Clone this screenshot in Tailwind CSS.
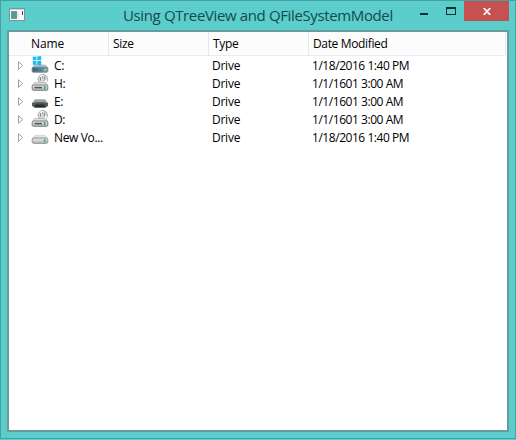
<!DOCTYPE html>
<html lang="en">
<head>
<meta charset="utf-8">
<title>Using QTreeView and QFileSystemModel</title>
<script src="https://cdn.jsdelivr.net/npm/@tailwindcss/browser@4"></script>
</head>
<body class="overflow-hidden bg-[#5bcdcb]">
<svg class="absolute h-0 w-0">
  <defs>
    <linearGradient id="face" x1="0" x2="0" y1="0" y2="1"><stop offset="0" stop-color="#e9eaeb"/><stop offset="1" stop-color="#b3b6b8"/></linearGradient>
    <linearGradient id="blue" x1="0" x2="1" y1="0" y2="0"><stop offset="0" stop-color="#2f637f"/><stop offset="1" stop-color="#7c9aa8"/></linearGradient>
    <symbol id="arrow" viewBox="0 0 7 9"><path d="M1.5 .7V8.3L5.7 4.5Z" fill="#fff" stroke="#a0a0a0"/></symbol>
    <symbol id="system" viewBox="0 0 18 18">
      <path d="M3.5 8.5H14.5L17 12H1Z" fill="#b5bfc5"/>
      <rect x="1.2" y="11.2" width="15.6" height="5" rx="1" fill="url(#blue)" stroke="#7c878d" stroke-width=".9"/>
      <path d="M12.7 14H15.2" stroke="#5ef4a0" stroke-width="1.6"/>
      <path d="M1.8 .8 5.4 .5V4.3H1.8ZM6.2.4 10.2 0V4.3H6.2ZM1.8 5.1H5.4V9L1.8 8.7ZM6.2 5.1H10.2V9.5L6.2 9.1Z" fill="#1dbdec"/>
    </symbol>
    <symbol id="disc" viewBox="0 0 18 18">
      <circle cx="11.8" cy="5.2" r="4.7" fill="#d9dbdb" stroke="#999d9e" stroke-width=".8"/>
      <path d="M11.8 5.2 8.8 2A5 5 0 0 1 12 .9Z" fill="#fff"/><path d="M11.8 5.2 14.5 9A5 5 0 0 0 16 6.2Z" fill="#fff"/>
      <path d="M9.5 3V6.5M11.6 2.2V4.3M13.8 2.7 13 7" stroke="#858989" stroke-width="1"/>
      <path d="M3.5 8.5H14.5L16.5 11.5H1.5Z" fill="#dddfe0" stroke="#a4a8a9" stroke-width=".6"/>
      <rect x="1.2" y="11" width="15.6" height="5.3" rx="1.2" fill="url(#face)" stroke="#707476" stroke-width=".9"/>
      <path d="M3.5 13.6H11" stroke="#4e5254" stroke-width="1.5"/>
      <path d="M13.7 12V15.3" stroke="#43b25b" stroke-width="1.8"/>
    </symbol>
    <symbol id="dark" viewBox="0 0 18 18">
      <path d="M4 7.3H14L17 11V14H1V11Z" fill="#a0a3a5"/>
      <path d="M1 11Q9 9 17 11V13.5L15 15.5H3L1 13.5Z" fill="#55585a"/>
      <path d="M4.5 12.5H13.5L14.3 15.5H3.7Z" fill="#2b2d2f"/>
    </symbol>
    <symbol id="plain" viewBox="0 0 18 18">
      <path d="M4 7.3H14L16.6 10.5H1.4Z" fill="#e4e6e6" stroke="#c2c5c6" stroke-width=".6"/>
      <rect x="1.2" y="10" width="15.6" height="5.3" rx="1.4" fill="url(#face)" stroke="#85898a" stroke-width=".9"/>
      <path d="M13.7 11.2V14.2" stroke="#42b957" stroke-width="1.8"/>
    </symbol>
  </defs>
</svg>
<div class="flex h-[439px] w-[516px] flex-col border border-[#46a09f] bg-[#5bcdcb] pl-[6px] pr-[6px] font-['Open_Sans','Noto_Sans',sans-serif]">
  <header class="flex h-[29px] shrink-0 items-start">
    <svg class="ml-[2px] mt-[7px] h-[14px] w-4 shrink-0" viewBox="0 0 16 14">
      <rect x=".5" y=".5" width="15" height="12" fill="#fafafa" stroke="#77999a"/>
      <path d="M1 1.5H15" stroke="#cfd4d4"/><rect x="2.5" y="3.5" width="5" height="7" fill="#579b88" stroke="#7794a4"/>
      <path d="M9 4V10" stroke="#d4d4d4"/><path d="M13.5 3V7" stroke="#37464a"/>
    </svg>
    <h1 class="ml-[98px] mt-[3px] w-[289px] whitespace-nowrap text-[15px] leading-[22px] tracking-[-0.37px] text-[#17494b]">Using QTreeView and QFileSystemModel</h1>
    <svg class="h-5 w-[52px] shrink-0" viewBox="0 0 52 20"><path d="M8 13H16" stroke="#102f2f" stroke-width="2"/><path d="M34 6H44V14H34Z M35 8V13H43V8Z" fill="#102f2f" fill-rule="evenodd"/></svg>
    <div class="-mr-px flex h-5 w-[45px] shrink-0 items-center justify-center bg-[#c75050]">
      <svg class="h-[7px] w-2" viewBox="0 0 8 7"><path d="M.7 0 7.3 7M7.3 0 .7 7" stroke="#fff" stroke-width="1.7"/></svg>
    </div>
  </header>
  <main class="h-[402px] w-[502px] border-2 border-[#679b9d] bg-white text-[12px] text-black">
    <div class="mr-px grid h-6 grid-cols-[100px_100px_100px_1fr] border-b border-[#e3edf6] bg-[#fcfcfc] leading-[23px] tracking-[-0.35px]">
      <div class="border-r border-[#dfeaf4] pl-[22px] tracking-[-0.1px]">Name</div>
      <div class="border-r border-[#dfeaf4] pl-1">Size</div>
      <div class="border-r border-[#dfeaf4] pl-1">Type</div>
      <div class="border-r border-[#dfeaf4] pl-1">Date Modified</div>
    </div>
    <div id="rows"></div>
  </main>
</div>
<script>
const drives = [
  ['system', 'C:', '1/18/2016 1:40 PM'],
  ['disc', 'H:', '1/1/1601 3:00 AM'],
  ['dark', 'E:', '1/1/1601 3:00 AM'],
  ['disc', 'D:', '1/1/1601 3:00 AM'],
  ['plain', 'New Vo...', '1/18/2016 1:40 PM'],
];
document.getElementById('rows').innerHTML = drives.map(([icon, name, date]) => `
  <div class="grid h-[18px] grid-cols-[203px_100px_1fr] whitespace-nowrap leading-[19px] tracking-[-0.25px]">
    <div class="flex"><svg class="ml-2 mt-[5px] h-[9px] w-[7px]"><use href="#arrow"/></svg><svg class="ml-[7px] h-[18px] w-[18px]"><use href="#${icon}"/></svg><span class="ml-[5px] tracking-[-0.35px]">${name}</span></div>
    <div>Drive</div><div class="tracking-[-0.45px]">${date}</div>
  </div>`).join('');
</script>
</body>
</html>
